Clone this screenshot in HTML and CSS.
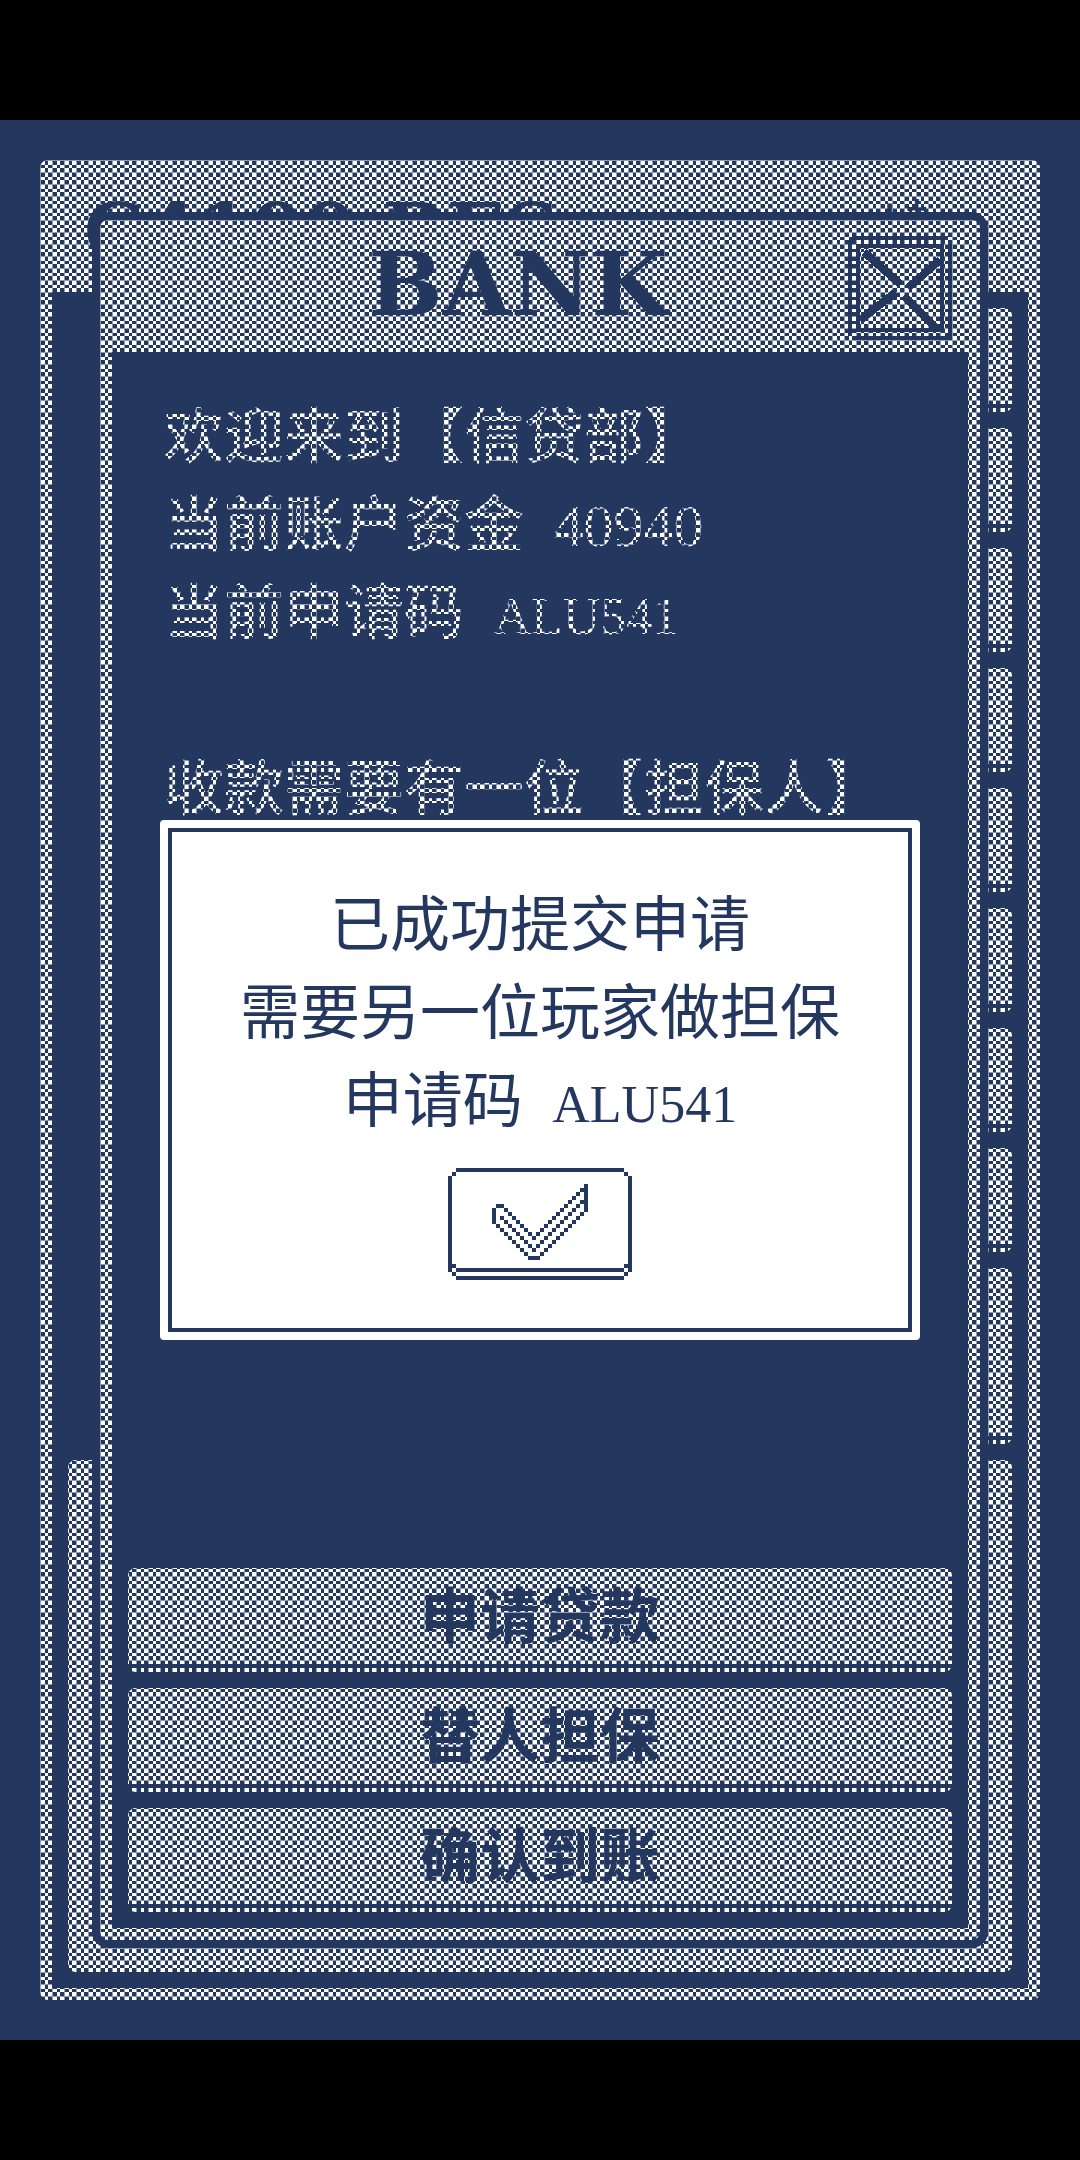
FILE: index.html
```html
<!DOCTYPE html>
<html lang="zh-CN">
<head>
<meta charset="utf-8">
<meta name="viewport" content="width=device-width, initial-scale=1">
<title>BANK</title>
<link rel="stylesheet" href="styles.css">
</head>
<body>
<main class="stage">
  <div class="screen" aria-hidden="true">
    <div class="screen-head"><span>C4100 BES</span><span class="screen-mark">+† ‥</span></div>
    <div class="screen-body">
      <div class="tab"></div>
      <div class="tab"></div>
      <div class="tab"></div>
      <div class="tab"></div>
      <div class="tab"></div>
      <div class="tab"></div>
      <div class="tab"></div>
      <div class="tab"></div>
      <div class="tab tab-tall"></div>
      <div class="screen-log"></div>
    </div>
  </div>

  <section class="bank">
    <div class="bank-frame">
      <header class="bank-head">
        <h1 class="bank-title">BANK</h1>
        <button class="close" type="button" aria-label="关闭">
          <svg viewBox="0 0 26 26" width="104" height="104" fill="none" stroke="currentColor" shape-rendering="crispEdges">
            <path d="M1 .5H25M1 25.5H25M.5 1V25M25.5 1V25"/>
            <path d="M2.500 2.500H23.500V23.500H2.500Z"/>
            <path stroke-width="2" d="M4 4L13 12M14 15L22 23M3 21L12 14M15 13L23 6"/>
          </svg>
        </button>
      </header>
      <div class="bank-text">
        <p>欢迎来到【信贷部】</p>
        <p>当前账户资金 <span class="sum">40940</span></p>
        <p>当前申请码 <span class="code">ALU541</span></p>
        <p class="gap-above">收款需要有一位【担保人】</p>
      </div>
      <div class="bank-actions">
        <button class="action" type="button">申请贷款</button>
        <button class="action" type="button">替人担保</button>
        <button class="action" type="button">确认到账</button>
      </div>
    </div>
  </section>

  <svg class="dither" width="100%" height="100%" aria-hidden="true">
    <defs>
      <pattern id="checks" width="24" height="24" viewBox="0 0 16 16" patternUnits="userSpaceOnUse">
        <path fill="#24375f" d="M3 0h3v3h-3zM8 0h3v3h-3zM14 0h2v3h-2zM0 3h3v3h-3zM6 3h2v3h-2zM11 3h3v3h-3zM3 6h3v2h-3zM8 6h3v2h-3zM14 6h2v2h-2zM0 8h3v3h-3zM6 8h2v3h-2zM11 8h3v3h-3zM3 11h3v3h-3zM8 11h3v3h-3zM14 11h2v3h-2zM0 14h3v2h-3zM6 14h2v2h-2zM11 14h3v2h-3z"/>
      </pattern>
    </defs>
    <rect width="100%" height="100%" fill="url(#checks)"/>
  </svg>

  <div class="overlay">
    <div class="notice" role="dialog" aria-label="申请结果">
      <div class="notice-frame">
        <p>已成功提交申请</p>
        <p>需要另一位玩家做担保</p>
        <p>申请码 <span class="code">ALU541</span></p>
        <button class="ok" type="button" aria-label="确定">
          <svg viewBox="0 0 46 28" width="184" height="112" fill="currentColor" shape-rendering="crispEdges">
            <path d="M2 0H44V1H2ZM1 1H2V2H1ZM44 1H45V2H44ZM0 2H1V26H0ZM45 2H46V26H45ZM1 24H2V25H1ZM44 24H45V25H44ZM2 25H44V26H2ZM1 26H2V27H1ZM44 26H45V27H44ZM2 27H44V28H2Z"/>
            <path d="M11 10h1v4h-1zM12 9h2v1h-2zM34 4h1v7h-1zM20 22h3v1h-3z"/>
            <path d="M14 10h1v1h1v1h1v1h1v1h1v1h1v1h1v1h1v1h-1v-1h-1v-1h-1v-1h-1v-1h-1v-1h-1v-1h-1v-1h-1z"/>
            <path d="M22 17h1v-1h1v-1h1v-1h1v-1h1v-1h1v-1h1v-1h1v-1h1v-1h1v-1h1v-1h1v-1h-1v1h-1v1h-1v1h-1v1h-1v1h-1v1h-1v1h-1v1h-1v1h-1v1h-1v1h-1z"/>
            <path d="M13 12h1v1h1v1h1v1h1v1h1v1h1v1h1v1h1v1h1v1h-1v-1h-1v-1h-1v-1h-1v-1h-1v-1h-1v-1h-1v-1h-1v-1h-1z"/>
            <path d="M22 20h1v-1h1v-1h1v-1h1v-1h1v-1h1v-1h1v-1h1v-1h1v-1h1v-1h1v-1h1v-1h-1v1h-1v1h-1v1h-1v1h-1v1h-1v1h-1v1h-1v1h-1v1h-1v1h-1v1h-1z"/>
            <path d="M12 14h1v1h1v1h1v1h1v1h1v1h1v1h1v1h1v1h-1v-1h-1v-1h-1v-1h-1v-1h-1v-1h-1v-1h-1v-1h-1z"/>
            <path d="M23 22h1v-1h1v-1h1v-1h1v-1h1v-1h1v-1h1v-1h1v-1h1v-1h1v-1h1v-1h-1v1h-1v1h-1v1h-1v1h-1v1h-1v1h-1v1h-1v1h-1v1h-1v1h-1z"/>
          </svg>
        </button>
      </div>
    </div>
  </div>
</main>
</body>
</html>
```
FILE: styles.css
```css
:root {
  --navy: #24375f;
  --white: #fff;
}

* {
  box-sizing: border-box;
  margin: 0;
}

body {
  display: flex;
  flex-direction: column;
  min-height: 100vh;
  padding: 120px 0;
  background: #000;
  color: var(--navy);
  font-family: "Noto Sans CJK SC", sans-serif;
  font-size: 60px;
  line-height: 88px;
}

button {
  border: 0;
  padding: 0;
  background: none;
  color: inherit;
  font: inherit;
}

svg {
  display: block;
}

.stage {
  position: relative;
  display: flex;
  flex: 1;
  flex-direction: column;
  padding: 40px;
  background: var(--navy);
}

/* game screen behind the bank window */
.screen {
  display: flex;
  flex: 1;
  flex-direction: column;
  border: 12px solid var(--white);
  border-radius: 8px;
}

.screen-head {
  display: flex;
  justify-content: space-between;
  height: 120px;
  padding: 12px 60px 0 32px;
  background: var(--white);
  font-family: "DejaVu Serif", serif;
  font-weight: bold;
  font-size: 76px;
  line-height: 96px;
}

.screen-mark {
  font-size: 40px;
  line-height: 60px;
}

.screen-body {
  display: flex;
  flex: 1;
  flex-direction: column;
  align-items: flex-end;
  gap: 16px;
  padding: 16px;
}

.tab,
.action {
  height: 104px;
  border-radius: 8px;
  background: linear-gradient(var(--white) 0 0) top / 100% calc(100% - 8px) no-repeat,
    linear-gradient(var(--white) 0 0) bottom / 100% 4px no-repeat;
}

.tab {
  width: 50%;
}

.tab-tall {
  height: 176px;
}

.screen-log {
  flex: 1;
  align-self: stretch;
  border-radius: 8px;
  background: var(--white);
}

/* bank window */
.bank {
  position: absolute;
  inset: 92px;
  display: flex;
  border: 8px solid var(--navy);
  border-radius: 16px;
  background: var(--navy);
}

.bank-frame {
  display: flex;
  flex: 1;
  flex-direction: column;
  border: 12px solid var(--white);
  border-radius: 8px;
}

.bank-head {
  display: grid;
  grid-template-columns: 1fr auto 1fr;
  align-items: start;
  height: 120px;
  padding: 4px 16px 0;
  background: var(--white);
}

.bank-title {
  grid-column: 2;
  margin-right: 44px;
  font-family: "DejaVu Serif", serif;
  font-weight: bold;
  font-size: 88px;
  line-height: 96px;
}

.close {
  justify-self: end;
}

.bank-text {
  flex: 1;
  padding: 36px 52px;
  color: var(--white);
  font-weight: 500;
}

.bank-text p {
  white-space: nowrap;
}

.gap-above {
  margin-top: 88px;
}

.bank-actions {
  display: flex;
  flex-direction: column;
  gap: 16px;
  padding: 16px;
}

.action {
  padding-bottom: 16px;
  font-weight: bold;
}

.sum,
.code {
  margin-left: 16px;
  font-family: "Liberation Serif", serif;
  line-height: 1;
}

.sum {
  font-size: 60px;
}

.code {
  font-size: 52px;
}

/* checkerboard dimming under the notice */
.dither {
  position: absolute;
  inset: 0;
}

.overlay {
  position: absolute;
  inset: 0;
  display: grid;
  align-items: center;
  padding: 0 160px;
}

.notice {
  padding: 8px;
  border-radius: 4px;
  background: var(--white);
}

.notice-frame {
  display: flex;
  flex-direction: column;
  align-items: center;
  padding: 44px 0 48px;
  border: 4px solid var(--navy);
}

.ok {
  margin-top: 28px;
}
```
